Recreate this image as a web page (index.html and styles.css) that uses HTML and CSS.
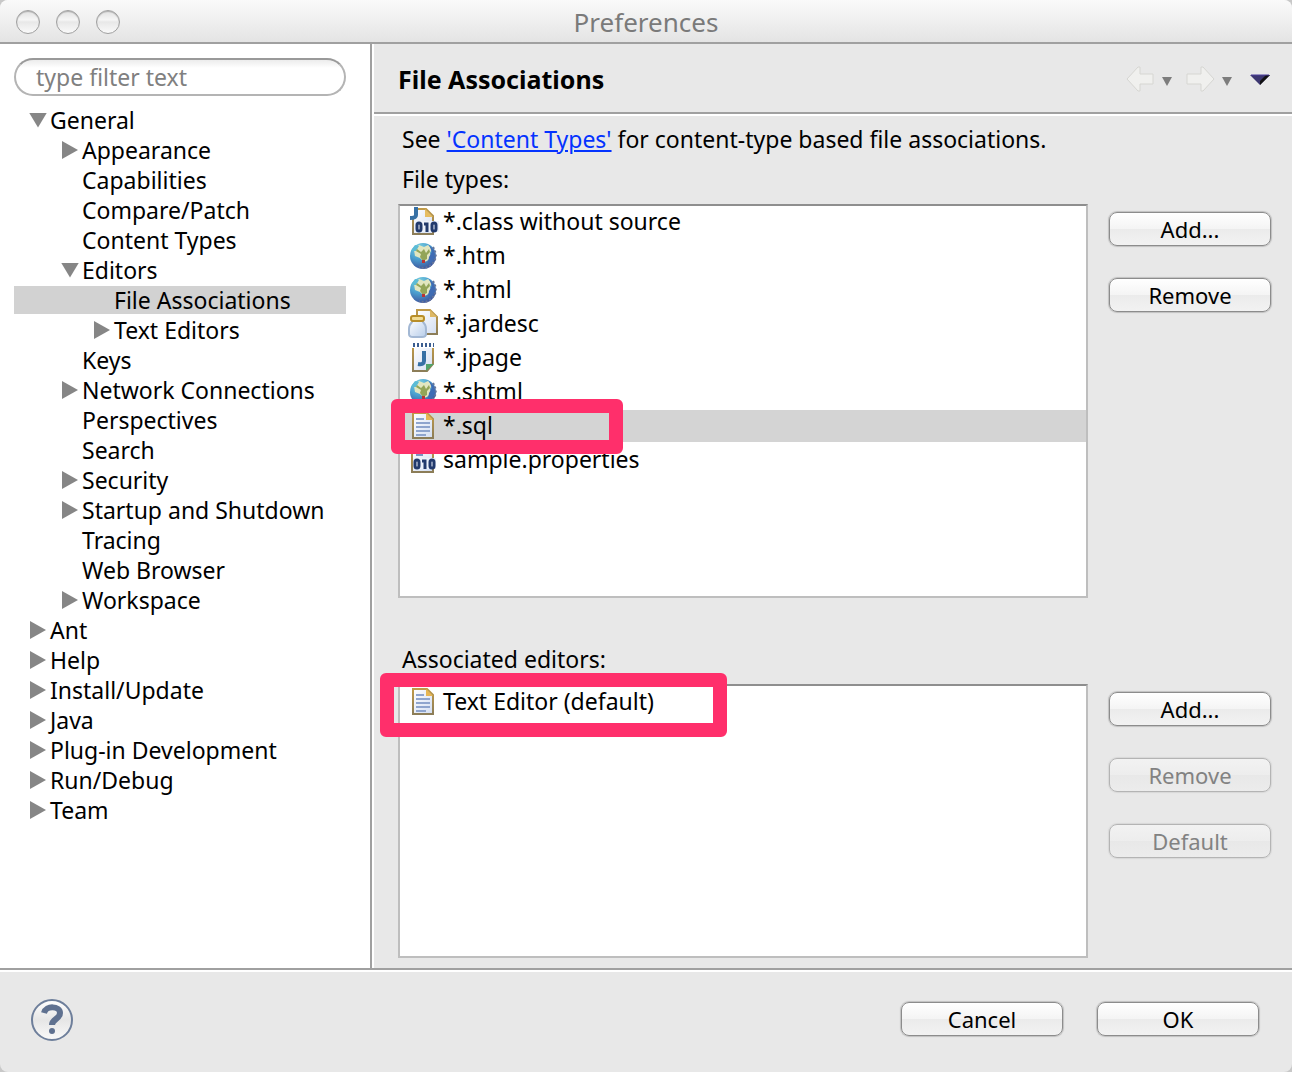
FILE: index.html
```html
<!DOCTYPE html>
<html lang="en">
<head>
<meta charset="utf-8">
<title>Preferences</title>
<link rel="stylesheet" href="styles.css">
</head>
<body>
<svg class="symbols" aria-hidden="true">
  <defs>
    <linearGradient id="paper" x1="0" y1="0" x2="1" y2="1"><stop offset="0" stop-color="#fff"/><stop offset="1" stop-color="#d3def2"/></linearGradient>
    <linearGradient id="edge" x1="0" y1="0" x2="0" y2="1"><stop offset="0" stop-color="#c09a48"/><stop offset="1" stop-color="#8c7d58"/></linearGradient>
    <radialGradient id="sea" cx=".35" cy=".2" r=".85"><stop offset="0" stop-color="#7fd4e2"/><stop offset=".5" stop-color="#4a9fcf"/><stop offset="1" stop-color="#3c4f9a"/></radialGradient>
    <linearGradient id="glass" x1="0" y1="0" x2="1" y2="1"><stop offset="0" stop-color="#fff"/><stop offset="1" stop-color="#b7cdea"/></linearGradient>
  </defs>
  <symbol id="i-class" viewBox="0 0 32 32">
    <path d="M9 4h9l7 7v18H5V13" fill="url(#paper)" stroke="url(#edge)" stroke-width="2"/>
    <path d="M17 4v8h8z" fill="#e6bd62"/>
    <path d="M8 2v8q0 3-6 3" fill="none" stroke="#3670a5" stroke-width="4"/>
    <path d="M7 16h24v11H7z" fill="#edf2fb"/>
    <g fill="none" stroke="#223a6c" stroke-width="3"><rect x="9" y="18" width="4" height="8" rx="2"/><path d="M16 19h3v8"/><rect x="24" y="18" width="4" height="8" rx="2"/></g>
  </symbol>
  <symbol id="i-globe" viewBox="0 0 32 32">
    <circle cx="15" cy="17" r="13" fill="url(#sea)"/>
    <path d="M6 11l5-5 5 2 4-2 4 4-2 4 1 4-4 4-3 1-4-4-5-2z" fill="#e2e6c0"/>
    <path d="M3 12l4-6 4 1-3 5z" fill="#5cbcd6"/>
    <path d="M9 10l4 3 3-3 2 4 3-4 1 3-3 3v4l-4 2-3-4 1-3-5-3z" fill="#93a558"/>
    <path d="M21 6l5 5 1 7-4 5-3 2 1-7 3-5z" fill="#3f6cb4"/>
    <path d="M14 21h3v3h-3z" fill="#ba3434"/>
    <path d="M25 8q6 10-1 17-6 6-13 3" fill="none" stroke="#66769a" stroke-width="2" stroke-dasharray="2 2"/>
  </symbol>
  <symbol id="i-jar" viewBox="0 0 32 32">
    <path d="M9 9V3h13l7 7v17H16" fill="url(#paper)" stroke="url(#edge)" stroke-width="2"/>
    <path d="M22 3v7h7z" fill="#ddb865"/>
    <path d="M4 13h11v2q3 3 3 7v5q0 3-4 3H5q-4 0-4-3v-5q0-4 3-7z" fill="url(#glass)" stroke="#a3b8d4" stroke-width="2"/>
    <rect x="3" y="9" width="13" height="5" rx="2" fill="#f1dc94" stroke="#b88e28" stroke-width="2"/>
  </symbol>
  <symbol id="i-jpage" viewBox="0 0 32 32">
    <path d="M5 5h20v18l-6 7H5z" fill="url(#paper)" stroke="url(#edge)" stroke-width="2"/>
    <path d="M4 4h22" stroke="#fff" stroke-width="6"/>
    <path d="M5 4h21" stroke="#3b5d90" stroke-width="4" stroke-dasharray="2 2"/>
    <path d="M16 10v10q0 4-6 3" fill="none" stroke="#3670a5" stroke-width="4"/>
    <path d="M18 30v-7h8z" fill="#51a36a"/>
  </symbol>
  <symbol id="i-text" viewBox="0 0 32 32">
    <path d="M5 4h14l6 6v19H5z" fill="url(#paper)" stroke="url(#edge)" stroke-width="2"/>
    <path d="M18 4v7h7z" fill="#e6b654"/>
    <path d="M8 10h8M8 14h14M8 18h14M8 22h14M8 26h10" stroke="#8fa5ce" stroke-width="2"/>
  </symbol>
  <symbol id="i-prop" viewBox="0 0 32 32">
    <path d="M4 4h14l7 7v18H4z" fill="url(#paper)" stroke="url(#edge)" stroke-width="2"/>
    <path d="M8 12h7" stroke="#7b94c3" stroke-width="2"/>
    <path d="M5 15h23v11H5z" fill="#edf2fb"/>
    <g fill="none" stroke="#223a6c" stroke-width="3"><rect x="7" y="17" width="4" height="8" rx="2"/><path d="M14 18h3v8"/><rect x="22" y="17" width="4" height="8" rx="2"/></g>
  </symbol>
</svg>

<div class="window">
  <header class="titlebar">
    <div class="lights">
      <button class="light" aria-label="Close"></button>
      <button class="light" aria-label="Minimize"></button>
      <button class="light" aria-label="Zoom"></button>
    </div>
    <h1 class="title">Preferences</h1>
  </header>

  <div class="body">
    <nav class="sidebar" aria-label="Preference pages">
      <input class="filter" type="text" placeholder="type filter text" aria-label="Filter pages">
      <ul class="tree">
        <li><a class="node open" href="#">General</a>
          <ul>
            <li><a class="node closed" href="#">Appearance</a></li>
            <li><a class="node" href="#">Capabilities</a></li>
            <li><a class="node" href="#">Compare/Patch</a></li>
            <li><a class="node" href="#">Content Types</a></li>
            <li><a class="node open" href="#">Editors</a>
              <ul>
                <li><a class="node selected" href="#" aria-current="page">File Associations</a></li>
                <li><a class="node closed" href="#">Text Editors</a></li>
              </ul>
            </li>
            <li><a class="node" href="#">Keys</a></li>
            <li><a class="node closed" href="#">Network Connections</a></li>
            <li><a class="node" href="#">Perspectives</a></li>
            <li><a class="node" href="#">Search</a></li>
            <li><a class="node closed" href="#">Security</a></li>
            <li><a class="node closed" href="#">Startup and Shutdown</a></li>
            <li><a class="node" href="#">Tracing</a></li>
            <li><a class="node" href="#">Web Browser</a></li>
            <li><a class="node closed" href="#">Workspace</a></li>
          </ul>
        </li>
        <li><a class="node closed" href="#">Ant</a></li>
        <li><a class="node closed" href="#">Help</a></li>
        <li><a class="node closed" href="#">Install/Update</a></li>
        <li><a class="node closed" href="#">Java</a></li>
        <li><a class="node closed" href="#">Plug-in Development</a></li>
        <li><a class="node closed" href="#">Run/Debug</a></li>
        <li><a class="node closed" href="#">Team</a></li>
      </ul>
    </nav>

    <main class="page">
      <div class="page-head">
        <h2 class="page-title">File Associations</h2>
        <div class="history">
          <button class="tool" aria-label="Back" disabled><svg width="46" height="28" viewBox="0 0 46 28"><path d="M1 14L12 2h2v7h13v10H14v7h-2z" fill="#f0f0ee" stroke="#d6d6d2" stroke-width="1"/><path d="M36 12h10l-5 9z" fill="#7d7d7d"/></svg></button>
          <button class="tool" aria-label="Forward" disabled><svg width="46" height="28" viewBox="0 0 46 28"><path d="M28 14L17 2h-2v7H1v10h14v7h2z" fill="#f0f0ee" stroke="#d6d6d2" stroke-width="1"/><path d="M36 12h10l-5 9z" fill="#7d7d7d"/></svg></button>
          <button class="tool" aria-label="Menu"><svg width="20" height="28" viewBox="0 0 20 28"><path d="M0 10h20L10 20z" fill="#3c3670"/><path d="M20 10L10 20v-4l6-6z" fill="#111"/><path d="M1 10h18" stroke="#4a3c9c"/></svg></button>
        </div>
      </div>

      <div class="content">
        <p class="line">See <a class="link" href="#">'Content Types'</a> for content-type based file associations.</p>
        <h3 class="line" id="types-label">File types:</h3>
        <section class="group types">
          <ul class="list" role="listbox" aria-labelledby="types-label">
            <li class="item" role="option"><svg class="icon"><use href="#i-class"/></svg>*.class without source</li>
            <li class="item" role="option"><svg class="icon"><use href="#i-globe"/></svg>*.htm</li>
            <li class="item" role="option"><svg class="icon"><use href="#i-globe"/></svg>*.html</li>
            <li class="item" role="option"><svg class="icon"><use href="#i-jar"/></svg>*.jardesc</li>
            <li class="item" role="option"><svg class="icon"><use href="#i-jpage"/></svg>*.jpage</li>
            <li class="item" role="option"><svg class="icon"><use href="#i-globe"/></svg>*.shtml</li>
            <li class="item current" role="option" aria-selected="true"><svg class="icon"><use href="#i-text"/></svg>*.sql<span class="mark mark-type"></span></li>
            <li class="item" role="option"><svg class="icon"><use href="#i-prop"/></svg>sample.properties</li>
          </ul>
          <div class="actions">
            <button class="btn">Add...</button>
            <button class="btn">Remove</button>
          </div>
        </section>
        <h3 class="line second" id="editors-label">Associated editors:</h3>
        <section class="group editors">
          <ul class="list" role="listbox" aria-labelledby="editors-label">
            <li class="item" role="option"><svg class="icon"><use href="#i-text"/></svg>Text Editor (default)<span class="mark mark-editor"></span></li>
          </ul>
          <div class="actions">
            <button class="btn">Add...</button>
            <button class="btn" disabled>Remove</button>
            <button class="btn" disabled>Default</button>
          </div>
        </section>
      </div>
    </main>
  </div>

  <footer class="footer">
    <button class="help" aria-label="Help"><svg width="44" height="44" viewBox="0 0 44 44"><defs><linearGradient id="hg" x1="0" y1="0" x2="0" y2="1"><stop offset="0" stop-color="#fff"/><stop offset=".5" stop-color="#e6e6e6"/><stop offset="1" stop-color="#fafafa"/></linearGradient></defs><circle cx="22" cy="23" r="20" fill="url(#hg)" stroke="#6e7f9b" stroke-width="2"/><path d="M14 16c2-8 16-7 16 0 0 6-8 6-8 12" fill="none" stroke="#5f7190" stroke-width="6"/><circle cx="22" cy="34" r="3" fill="#5f7190"/></svg></button>
    <div class="choices">
      <button class="btn">Cancel</button>
      <button class="btn">OK</button>
    </div>
  </footer>
</div>
</body>
</html>
```

FILE: styles.css
```css
* { box-sizing: border-box; }

body {
  margin: 0;
  background: #c8c8c8;
  color: #000;
  font: 23px/30px "Lucida Grande", "Noto Sans", sans-serif;
}

ul, h1, h2, h3, p { margin: 0; padding: 0; list-style: none; font-size: 23px; font-weight: 400; }
button, input { font: inherit; }
button { padding: 0; border: 0; background: none; }

.symbols { position: absolute; width: 0; height: 0; }

.window {
  display: flex;
  flex-direction: column;
  min-height: 100vh;
  background: #e8e8e8;
  border-radius: 8px;
  overflow: hidden;
}

.titlebar {
  display: grid;
  grid-template-columns: 1fr auto 1fr;
  align-items: center;
  height: 44px;
  padding: 0 16px;
  border-bottom: 2px solid #a0a0a0;
  background: linear-gradient(#fafafa, #e4e4e4);
}
.lights { display: flex; gap: 16px; padding-top: 2px; }
.light {
  width: 24px;
  height: 24px;
  border: 1px solid #a0a0a0;
  border-radius: 50%;
  background: linear-gradient(#e2e2e2, #f6f6f6 40%, #e8e8e8 50%, #fafafa);
  box-shadow: inset 0 1px 1px #b0b0b0;
}
.title { padding-top: 2px; color: #7a7a7a; font-size: 26px; }

.body { display: flex; flex: 1; }

.sidebar {
  flex: 0 0 372px;
  padding: 14px 24px 14px 14px;
  border-right: 2px solid #a0a0a0;
  background: #fff;
}
.filter {
  display: block;
  width: 100%;
  height: 38px;
  margin-bottom: 9px;
  padding: 0 20px;
  border: 2px solid #b4b4b4;
  border-top-color: #999;
  border-radius: 19px;
  background: linear-gradient(#ececec, #fff 8px);
}
.filter::placeholder { color: #808080; opacity: 1; }

.tree li { display: flow-root; }
.node {
  display: flex;
  align-items: center;
  height: 28px;
  margin: 1px 0;
  padding-left: 36px;
  color: inherit;
  text-decoration: none;
}
.tree ul .node { padding-left: 68px; }
.tree ul ul .node { padding-left: 100px; }
.open::before, .closed::before { content: ""; background: #868686; }
.open::before {
  width: 18px;
  height: 15px;
  margin: 0 3px 0 -21px;
  clip-path: polygon(0 0, 100% 0, 50% 100%);
}
.closed::before {
  width: 16px;
  height: 18px;
  margin: 0 4px 0 -20px;
  clip-path: polygon(0 0, 100% 50%, 0 100%);
}
.selected { background: #d2d2d2; }

.page {
  display: flex;
  flex: 1;
  flex-direction: column;
  border-left: 2px solid #fff;
}
.page-head {
  display: flex;
  align-items: center;
  justify-content: space-between;
  height: 70px;
  padding: 2px 22px 0 24px;
  border-bottom: 2px solid #a0a0a0;
}
.page-title { font-size: 25px; font-weight: 700; }
.history { display: flex; gap: 14px; }
.tool { display: flex; }
.tool:last-child { margin-left: 4px; }

.content {
  display: flex;
  flex: 1;
  flex-direction: column;
  padding: 8px 21px 10px 24px;
  border-top: 2px solid #fff;
}
.line { padding: 0 4px; margin-bottom: 10px; }
.second { margin: 46px 0 10px; }
.link { color: #0433ff; text-decoration-thickness: 2px; text-underline-offset: 2px; }

.group { display: flex; gap: 21px; }
.types { flex: 394 0 0; }
.editors { flex: 274 0 0; }
.list {
  flex: 1;
  border: 2px solid #bebebe;
  border-top-color: #8e8e8e;
  background: #fff;
}
.item {
  position: relative;
  display: flex;
  align-items: center;
  gap: 3px;
  height: 32px;
  margin-bottom: 2px;
  padding-left: 8px;
  line-height: 28px;
  padding-bottom: 2px;
}
.icon { width: 32px; height: 32px; }
.current { z-index: 1; background: #d4d4d4; }

/* highlight frames drawn over the rows */
.mark { position: absolute; border: 14px solid #ff2f6b; border-radius: 6px; }
.mark-type { left: -9px; top: -11px; width: 232px; height: 55px; }
.mark-editor { left: -20px; top: -13px; width: 347px; height: 64px; }

.actions { display: flex; flex-direction: column; gap: 32px; padding-top: 8px; }
.btn {
  width: 162px;
  height: 34px;
  border: 1px solid #8c8c8c;
  border-radius: 8px;
  background: linear-gradient(#fff, #f4f4f4 50%, #ebebeb 50%, #f2f2f2);
  box-shadow: 0 0 1px 1px #c0c0c0;
  font-size: 22px;
}
.btn:disabled {
  border-color: #b4b4b4;
  background: linear-gradient(#f2f2f2, #ededed 50%, #e8e8e8 50%, #ececec);
  box-shadow: 0 0 1px 1px #d8d8d8;
  color: #828282;
}

.footer {
  display: flex;
  align-items: center;
  justify-content: space-between;
  height: 104px;
  padding: 0 33px 4px 30px;
  border-top: 2px solid #a0a0a0;
  box-shadow: inset 0 2px #fff;
}
.help { display: flex; }
.choices { display: flex; gap: 34px; }
```
